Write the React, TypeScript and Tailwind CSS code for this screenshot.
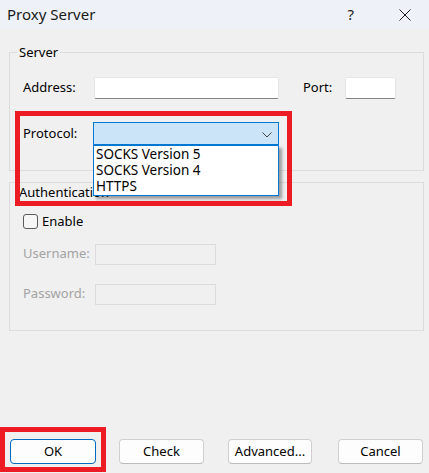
const font = { fontFamily: '"Noto Sans", "Open Sans", Arial, sans-serif' }

function TextBox({ className = '', disabled = false }: { className?: string; disabled?: boolean }) {
  return disabled ? (
    <div className={`h-[21px] border border-[#dcdcdc] bg-[#f0f0f0] ${className}`} />
  ) : (
    <div className={`h-[22px] rounded-[2px] border border-[#e5e5e5] border-b-[#868686] bg-white ${className}`} />
  )
}

function Button({ label, width, primary = false }: { label: string; width: string; primary?: boolean }) {
  return (
    <button
      className={`flex h-[25px] items-center justify-center rounded-[4px] border bg-[#fdfdfd] text-[13px] text-black ${width} ${
        primary ? 'border-[#0067c0]' : 'border-[#d0d0d0] border-b-[#bcbcbc]'
      }`}
    >
      {label}
    </button>
  )
}

function GroupTitle({ children }: { children: string }) {
  return (
    <span className="absolute left-[7px] top-[-9px] bg-[#f0f0f0] px-[2px] text-[13px] leading-[16px] text-black">
      {children}
    </span>
  )
}

export default function App() {
  return (
    <div className="relative h-[473px] w-[429px] overflow-hidden bg-[#f0f0f0] text-[13px] text-black" style={font}>
      {/* title bar */}
      <div className="flex h-[29px] items-center bg-[#eef2f8] pl-[7px]">
        <span className="text-[15px] text-[#1a1a1a]">Proxy Server</span>
        <span className="ml-auto mr-[45px] text-[15px] text-[#1a1a1a]">?</span>
        <svg width="12" height="12" viewBox="0 0 12 12" className="mr-[18px]">
          <path d="M0.5 0.5 L11.5 11.5 M11.5 0.5 L0.5 11.5" stroke="#1a1a1a" strokeWidth="1" fill="none" />
        </svg>
      </div>

      <div className="px-[9px] pt-[23px]">
        {/* server group */}
        <div className="relative h-[119px] w-[415px] border border-[#dcdcdc]">
          <GroupTitle>Server</GroupTitle>
          <div className="flex items-center pl-[13px] pt-[24px]">
            <span className="w-[71px]">Address:</span>
            <TextBox className="w-[185px]" />
            <span className="ml-[24px] w-[42px]">Port:</span>
            <TextBox className="w-[51px]" />
          </div>
          <div className="flex items-center pl-[13px] pt-[23px]">
            <span className="w-[70px]">Protocol:</span>
            <div className="relative h-[23px] w-[186px] border border-[#0078d4] bg-[#cce4f7]">
              <svg width="10" height="6" viewBox="0 0 10 6" className="absolute right-[6px] top-[9px]">
                <path d="M0.5 0.5 L5 5 L9.5 0.5" stroke="#444" strokeWidth="1" fill="none" />
              </svg>
              {/* open list */}
              <div className="absolute left-[-1px] top-[22px] z-10 w-[186px] border border-[#0078d4] bg-white pb-[1px] shadow-[3px_3px_3px_rgba(0,0,0,0.35)]">
                {['SOCKS Version 5', 'SOCKS Version 4', 'HTTPS'].map((item) => (
                  <div key={item} className="h-[16px] whitespace-nowrap pl-[2px] text-[13.5px] leading-[16px]">
                    {item}
                  </div>
                ))}
              </div>
            </div>
          </div>
        </div>

        {/* authentication group */}
        <div className="relative mt-[11px] h-[149px] w-[415px] border border-[#dcdcdc]">
          <span className="absolute left-[7px] top-[1px] bg-[#f0f0f0] px-[2px] text-[13px] leading-[16px]">Authentication</span>
          <label className="flex items-center pl-[13px] pt-[29px]">
            <span className="h-[15px] w-[15px] rounded-[3px] border border-[#5a5a5a] bg-[#f6f6f6]" />
            <span className="ml-[4px]">Enable</span>
          </label>
          <div className="flex items-center pl-[13px] pt-[12px] text-[#a3a3a3]">
            <span className="w-[72px]">Username:</span>
            <TextBox disabled className="w-[121px]" />
          </div>
          <div className="flex items-center pl-[13px] pt-[19px] text-[#a3a3a3]">
            <span className="w-[72px]">Password:</span>
            <TextBox disabled className="w-[121px]" />
          </div>
        </div>
      </div>

      {/* dialog buttons */}
      <div className="mt-[108px] flex pl-[10px]">
        <Button label="OK" width="w-[86px]" primary />
        <div className="ml-[23px]">
          <Button label="Check" width="w-[85px]" />
        </div>
        <div className="ml-[24px]">
          <Button label="Advanced..." width="w-[84px]" />
        </div>
        <div className="ml-[26px]">
          <Button label="Cancel" width="w-[85px]" />
        </div>
      </div>

      {/* red highlight frames */}
      <div className="pointer-events-none absolute left-[15px] top-[111px] z-20 h-[95px] w-[277px] border-[5px] border-[#ed1c24]" />
      <div className="pointer-events-none absolute left-[0px] top-[427px] z-20 h-[45px] w-[106px] border-[5px] border-[#ed1c24]" />
    </div>
  )
}
